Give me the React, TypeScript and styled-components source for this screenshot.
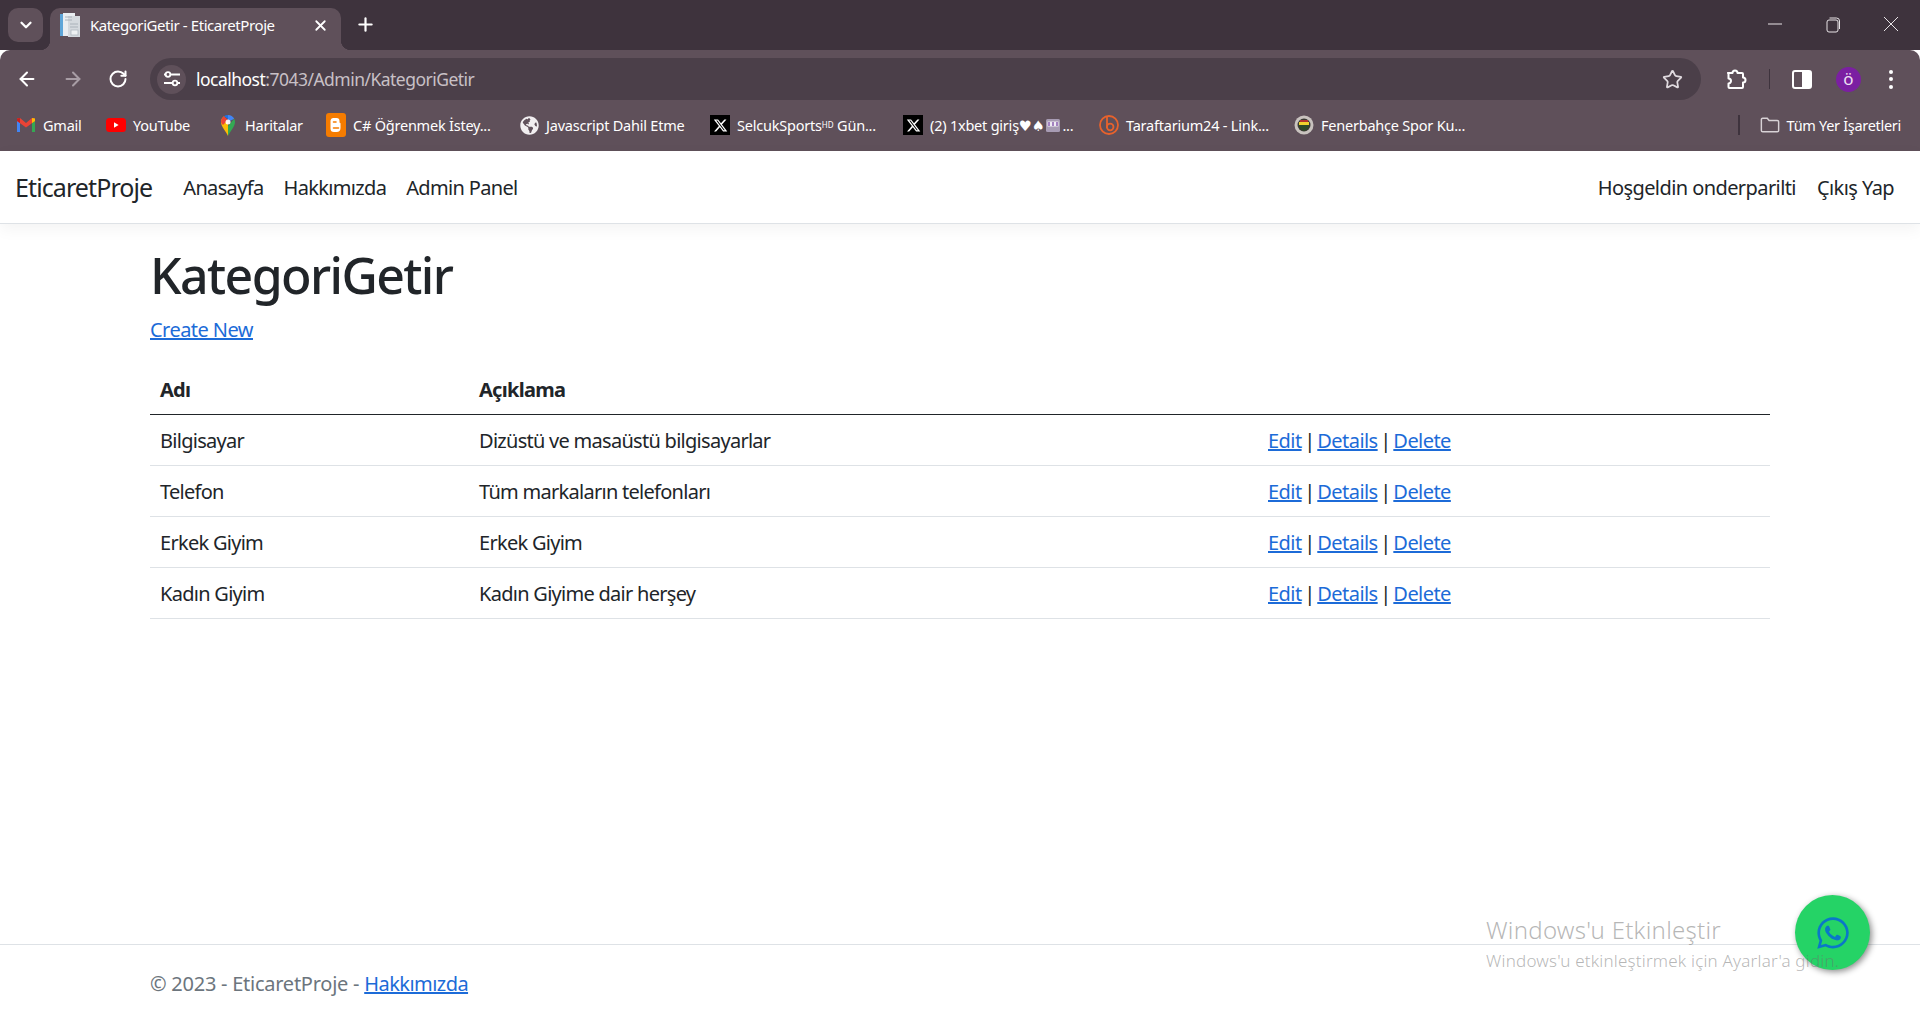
import React from "react";
import styled, { createGlobalStyle } from "styled-components";
import { ArrowLeft, ArrowRight, RotateCw, Star, X, Plus, ChevronDown } from "lucide-react";
import { FaWhatsapp, FaGlobeAmericas } from "react-icons/fa";
import { FaXTwitter } from "react-icons/fa6";

const FONT = "'Noto Sans', 'DejaVu Sans', sans-serif";

const Global = createGlobalStyle`
  html, body { margin: 0; padding: 0; background: #fff; }
  body { font-family: ${FONT}; color: #212529; }
  * { box-sizing: border-box; }
`;

const Page = styled.div`
  position: relative;
  width: 1920px;
  height: 1020px;
  overflow: hidden;
  display: flex;
  flex-direction: column;
`;

const TabStrip = styled.div`
  height: 50px;
  flex: none;
  background: #3e333d;
  display: flex;
  align-items: flex-end;
  padding-left: 8px;
  color: #fff;
`;
const TabSearch = styled.div`
  width: 35px;
  height: 34px;
  margin-bottom: 8px;
  border-radius: 10px;
  background: #5f505a;
  display: flex;
  align-items: center;
  justify-content: center;
`;
const Tab = styled.div`
  position: relative;
  width: 291px;
  height: 42px;
  margin-left: 7px;
  background: #5f505a;
  border-radius: 10px 10px 0 0;
  display: flex;
  align-items: center;
  padding: 0 12px 8px 10px;
  &::before, &::after {
    content: "";
    position: absolute;
    bottom: 0;
    width: 10px;
    height: 10px;
  }
  &::before { left: -10px; background: radial-gradient(circle at 0 0, transparent 10px, #5f505a 10.5px); }
  &::after { right: -10px; background: radial-gradient(circle at 100% 0, transparent 10px, #5f505a 10.5px); }
`;
const TabTitle = styled.span`
  margin-left: 10px;
  flex: 1;
  font-size: 15px;
  letter-spacing: -0.42px;
  white-space: nowrap;
`;
const NewTab = styled.div`
  margin: 0 0 15px 14px;
  display: flex;
`;
const WindowControls = styled.div`
  margin-left: auto;
  align-self: flex-start;
  display: flex;
  padding: 17px 22px 0 0;
  gap: 44px;
`;
const Toolbar = styled.div`
  height: 50px;
  flex: none;
  background: #5f505a;
  border-radius: 10px 10px 0 0;
  display: flex;
  align-items: flex-start;
  padding: 8px 0 0 16px;
  color: #fff;
`;
const NavIcons = styled.div`
  display: flex;
  align-items: center;
  gap: 24px;
  height: 42px;
  width: 134px;
  flex: none;
`;
const Omnibox = styled.div`
  width: 1551px;
  height: 42px;
  flex: none;
  background: #4b3f49;
  border-radius: 21px;
  display: flex;
  align-items: center;
  padding: 0 18px 0 7px;
`;
const TuneCircle = styled.div`
  width: 29px;
  height: 29px;
  border-radius: 50%;
  background: #5f505a;
  display: flex;
  align-items: center;
  justify-content: center;
  flex: none;
`;
const Url = styled.div`
  margin-left: 10px;
  flex: 1;
  font-size: 17.5px;
  letter-spacing: -0.52px;
  color: #c8c0c6;
  b { font-weight: 400; color: #fff; }
`;
const ToolIcons = styled.div`
  display: flex;
  align-items: center;
  height: 42px;
  margin-left: 24px;
`;
const ToolDivider = styled.div`
  width: 1px;
  height: 20px;
  background: #3e333d;
  margin: 0 22px 0 22px;
`;
const Avatar = styled.div`
  width: 25px;
  height: 25px;
  margin-left: 24px;
  border-radius: 50%;
  background: #7b1fa2;
  font-size: 17px;
  line-height: 1;
  padding-bottom: 2px;
  display: flex;
  align-items: center;
  justify-content: center;
  color: #ecdff2;
`;
const MenuDots = styled.div`
  display: flex;
  flex-direction: column;
  gap: 3.5px;
  margin-left: 28px;
`;
const MenuDot = styled.span`
  width: 4px;
  height: 4px;
  border-radius: 50%;
  background: #fff;
`;
const BookmarkBar = styled.div`
  height: 51px;
  flex: none;
  background: #5f505a;
  color: #fff;
  display: flex;
  align-items: flex-start;
  padding: 14px 19px 0 16px;
  font-size: 14.5px;
  letter-spacing: -0.22px;
`;
const Bookmark = styled.div<{ $w?: number }>`
  width: ${(p) => p.$w ?? 0}px;
  flex: none;
  height: 22px;
  display: flex;
  align-items: center;
  white-space: nowrap;
`;
const BmIcon = styled.span`
  width: 20px;
  height: 20px;
  margin-right: 7px;
  flex: none;
  display: flex;
  align-items: center;
  justify-content: center;
`;
const XBox = styled.span`
  width: 20px;
  height: 20px;
  background: #000;
  display: flex;
  align-items: center;
  justify-content: center;
`;
const Sup = styled.sup`
  font-size: 8px;
  letter-spacing: 0;
  line-height: 0;
  vertical-align: 4px;
`;
const BookmarkRight = styled.div`
  margin-left: auto;
  display: flex;
  align-items: center;
  height: 22px;
  letter-spacing: -0.3px;
`;
const BmDivider = styled.div`
  width: 2px;
  height: 20px;
  background: #3e333d;
  margin-right: 20px;
`;

const Navbar = styled.nav`
  height: 73px;
  flex: none;
  border-bottom: 1px solid #dee2e6;
  box-shadow: 0 5px 15px rgba(0, 0, 0, 0.05);
  display: flex;
  align-items: center;
  padding: 0 26px 0 15px;
  font-size: 20px;
  letter-spacing: -0.66px;
`;
const Brand = styled.span`
  font-size: 25px;
  letter-spacing: -0.9px;
  margin-right: 31px;
`;
const NavLink = styled.span`
  margin-right: 20px;
  color: #212529;
`;
const NavRight = styled.div`
  margin-left: auto;
  display: flex;
  gap: 21px;
  letter-spacing: -0.58px;
`;
const Container = styled.main`
  width: 1620px;
  margin: 0 150px;
  flex: 1;
`;
const Title = styled.h1`
  margin: 21px 0 0;
  font-size: 50px;
  font-weight: 500;
  line-height: 60px;
  letter-spacing: -1.6px;
`;
const CreatePara = styled.p`
  margin: 10px 0 20px;
  font-size: 20px;
  line-height: 30px;
  letter-spacing: -0.55px;
`;
const Link = styled.a`
  color: #1c6bd8;
  text-decoration: underline;
  letter-spacing: -0.55px;
`;
const Table = styled.table`
  width: 100%;
  border-collapse: collapse;
  font-size: 20px;
  letter-spacing: -0.72px;
  line-height: 30px;
`;
const Th = styled.th`
  text-align: left;
  padding: 10px 10px 9px;
  font-weight: 700;
  border-bottom: 1px solid #212529;
`;
const Td = styled.td`
  padding: 11px 10px 9px;
  border-bottom: 1px solid #dee2e6;
`;
const ActionCell = styled(Td)`
  word-spacing: -1.8px;
`;
const Footer = styled.footer`
  height: 76px;
  flex: none;
  border-top: 1px solid #dee2e6;
  padding: 24px 150px 0;
  font-size: 20px;
  line-height: 30px;
  color: #6c757d;
  letter-spacing: -0.25px;
`;
const Fab = styled.div`
  position: absolute;
  left: 1795px;
  top: 895px;
  width: 75px;
  height: 75px;
  border-radius: 50%;
  background: #25d366;
  box-shadow: 2px 2px 6px rgba(0, 0, 0, 0.45);
  display: flex;
  align-items: center;
  justify-content: center;
  color: #0a78c8;
`;
const Watermark = styled.div`
  position: absolute;
  left: 1486px;
  top: 913px;
  color: rgba(110, 110, 110, 0.5);
  font-weight: 300;
  pointer-events: none;
  white-space: nowrap;
`;
const WmTitle = styled.div`
  font-size: 24px;
  line-height: 34px;
  letter-spacing: 0.26px;
`;
const WmSub = styled.div`
  font-size: 17px;
  line-height: 24px;
  margin-top: 2px;
  letter-spacing: 0.2px;
`;

const Gmail = () => (
  <svg width="20" height="16" viewBox="0 0 20 16">
    <path d="M1 15V3l3 2v10z" fill="#4285f4" />
    <path d="M19 15V3l-3 2v10z" fill="#34a853" />
    <path d="M1 1.5 4 1l6 5 6-5 3 .5V4l-9 6.5L1 4z" fill="#ea4335" />
    <path d="M16 1l3 .5V4l-3 2z" fill="#fbbc04" />
    <path d="M1 1.5 4 1v5L1 4z" fill="#c5221f" />
  </svg>
);
const YouTube = () => (
  <svg width="20" height="14" viewBox="0 0 20 14">
    <rect width="20" height="14" rx="3.5" fill="#f00" />
    <path d="M8 4.2v5.6L12.6 7z" fill="#fff" />
  </svg>
);
const Maps = () => (
  <svg width="16" height="22" viewBox="0 0 16 22">
    <path d="M8 22C6 17 1 13 1 8a7 7 0 0 1 3-5.7L8 8z" fill="#fbbc04" />
    <path d="M8 22c2-5 7-9 7-14 0-1-.3-2.2-.8-3.2L8 12z" fill="#34a853" />
    <path d="M4 2.300A7 7 0 0 1 8 1v4z" fill="#1a73e8" />
    <path d="M8 1a7 7 0 0 1 6.200 3.800L8 8z" fill="#4285f4" />
    <path d="M1 8a7 7 0 0 1 3-5.700L8 6 3 11a7 7 0 0 1-2-3z" fill="#ea4335" />
    <circle cx="8" cy="8" r="2.500" fill="#fff" opacity=".9" />
  </svg>
);
const Blogger = () => (
  <svg width="20" height="24" viewBox="0 0 20 24">
    <rect y="0" width="20" height="24" rx="3" fill="#f57c00" />
    <path d="M7 5h3.500A3 3 0 0 1 13.500 8v1.500l1 .7V15a4 4 0 0 1-4 4H8a3.500 3.500 0 0 1-3.500-3.500v-8A3 3 0 0 1 7 5z" fill="#fff" />
    <path d="M7.500 9h2.500M7.500 15h5" stroke="#f57c00" strokeWidth="1.600" strokeLinecap="round" />
  </svg>
);
const Bitly = () => (
  <svg width="20" height="22" viewBox="0 0 20 22" fill="none" stroke="#e8622c" strokeWidth="1.800">
    <circle cx="10" cy="11" r="9" />
    <path d="M8 3v11" />
    <circle cx="11.200" cy="13" r="3.300" />
  </svg>
);
const Fener = () => (
  <svg width="20" height="22" viewBox="0 0 20 22">
    <circle cx="10" cy="11" r="9.500" fill="#c9c3bf" />
    <circle cx="10" cy="11" r="6.500" fill="#3b3a33" />
    <path d="M5 8h10v3H5z" fill="#f0d22d" />
    <path d="M5 11h10c0 3-2 5-5 6-3-1-5-3-5-6z" fill="#2f4a28" />
    <path d="M6 6h8v2H6z" fill="#b4342e" />
  </svg>
);
const Slot = () => (
  <svg width="16" height="16" viewBox="0 0 16 16" style={{ margin: "0 1px" }}>
    <rect x="1" y="2" width="14" height="13" rx="1.500" fill="#a79bb3" />
    <rect x="2.500" y="4.500" width="11" height="5" fill="#efeaf3" />
    <path d="M4 5v4M8 5v4M12 5v4" stroke="#8a5fb0" strokeWidth="1.500" />
  </svg>
);
const PageDoc = () => (
  <svg width="20" height="24" viewBox="0 0 20 24">
    <rect x="0" y="1" width="4" height="22" fill="#5ea5d8" />
    <rect x="3" y="0" width="12" height="23" fill="#e9edf1" />
    <rect x="8" y="3" width="12" height="21" fill="#d4d9de" />
    <path d="M5 4h7M5 7h7M10 11h8M10 14h8" stroke="#aab2ba" strokeWidth="1" />
    <rect x="11" y="17" width="7" height="5" fill="#eef1f3" stroke="#a9b3bb" strokeWidth=".7" />
  </svg>
);
const Tune = () => (
  <svg width="18" height="16" viewBox="0 0 18 16" fill="none" stroke="#fff" strokeWidth="1.800">
    <path d="M1 3.500h2M8 3.500h9" />
    <path d="M1 12h8M15 12h2" />
    <circle cx="5" cy="3.500" r="2.300" />
    <circle cx="12" cy="12" r="2.300" />
  </svg>
);
const Puzzle = () => (
  <svg width="22" height="22" viewBox="0 0 22 22" fill="none" stroke="#fff" strokeWidth="2" strokeLinejoin="round">
    <path d="M3 5h4.500a2.500 2.500 0 0 1 5 0H17a1 1 0 0 1 1 1v3.500a2.500 2.500 0 0 1 0 5V19a1 1 0 0 1-1 1H4.500a1 1 0 0 1-1-1v-3.500a2.500 2.500 0 0 0 0-5V6z" />
  </svg>
);
const SidePanel = () => (
  <svg width="20" height="20" viewBox="0 0 20 20">
    <rect x="1" y="2" width="18" height="17" rx="2" fill="none" stroke="#fff" strokeWidth="2" />
    <rect x="10" y="2" width="9" height="17" fill="#fff" />
  </svg>
);
const Minimize = () => (
  <svg width="14" height="14" viewBox="0 0 14 14"><path d="M0 7h14" stroke="#e8e4e7" strokeWidth="1" /></svg>
);
const Restore = () => (
  <svg width="14" height="16" viewBox="0 0 14 16" fill="none" stroke="#e8e4e7" strokeWidth="1">
    <rect x="1" y="3" width="11" height="12" rx="2" />
    <path d="M3.500 1h7a3 3 0 0 1 3 3v8" />
  </svg>
);
const CloseWin = () => (
  <svg width="14" height="14" viewBox="0 0 14 14"><path d="M0 0l14 14M14 0L0 14" stroke="#e8e4e7" strokeWidth="1" /></svg>
);
const Folder = () => (
  <svg width="22" height="18" viewBox="0 0 22 18" fill="none" stroke="#d8d2d6" strokeWidth="1.600">
    <path d="M1.500 3a1.500 1.500 0 0 1 1.500-1.500h5L10 4h9a1.500 1.500 0 0 1 1.500 1.500V15a1.500 1.500 0 0 1-1.500 1.500H3A1.500 1.500 0 0 1 1.500 15z" />
  </svg>
);

const rows = [
  ["Bilgisayar", "Dizüstü ve masaüstü bilgisayarlar"],
  ["Telefon", "Tüm markaların telefonları"],
  ["Erkek Giyim", "Erkek Giyim"],
  ["Kadın Giyim", "Kadın Giyime dair herşey"],
];

export default function App() {
  return (
    <Page>
      <Global />
      <TabStrip>
        <TabSearch>
          <ChevronDown size={18} strokeWidth={3} />
        </TabSearch>
        <Tab>
          <PageDoc />
          <TabTitle>KategoriGetir - EticaretProje</TabTitle>
          <X size={17} strokeWidth={2.5} />
        </Tab>
        <NewTab>
          <Plus size={21} strokeWidth={2.5} />
        </NewTab>
        <WindowControls>
          <Minimize />
          <Restore />
          <CloseWin />
        </WindowControls>
      </TabStrip>
      <Toolbar>
        <NavIcons>
          <ArrowLeft size={22} strokeWidth={2.2} />
          <ArrowRight size={22} strokeWidth={2.2} color="#a89da5" />
          <RotateCw size={20} strokeWidth={2.4} />
        </NavIcons>
        <Omnibox>
          <TuneCircle>
            <Tune />
          </TuneCircle>
          <Url>
            <b>localhost</b>:7043/Admin/KategoriGetir
          </Url>
          <Star size={21} strokeWidth={2} color="#e0dadf" />
        </Omnibox>
        <ToolIcons>
          <Puzzle />
          <ToolDivider />
          <SidePanel />
          <Avatar>ö</Avatar>
          <MenuDots>
            <MenuDot />
            <MenuDot />
            <MenuDot />
          </MenuDots>
        </ToolIcons>
      </Toolbar>
      <BookmarkBar>
        <Bookmark $w={90}>
          <BmIcon><Gmail /></BmIcon>Gmail
        </Bookmark>
        <Bookmark $w={112}>
          <BmIcon><YouTube /></BmIcon>YouTube
        </Bookmark>
        <Bookmark $w={108}>
          <BmIcon><Maps /></BmIcon>Haritalar
        </Bookmark>
        <Bookmark $w={193}>
          <BmIcon><Blogger /></BmIcon>C# Öğrenmek İstey...
        </Bookmark>
        <Bookmark $w={191}>
          <BmIcon><FaGlobeAmericas size={19} color="#f1eef0" /></BmIcon>Javascript Dahil Etme
        </Bookmark>
        <Bookmark $w={193}>
          <BmIcon><XBox><FaXTwitter size={15} color="#fff" /></XBox></BmIcon>SelcukSports<Sup>HD</Sup>&nbsp;Gün...
        </Bookmark>
        <Bookmark $w={196}>
          <BmIcon><XBox><FaXTwitter size={15} color="#fff" /></XBox></BmIcon>(2) 1xbet giriş♥♠<Slot /> ...
        </Bookmark>
        <Bookmark $w={195}>
          <BmIcon><Bitly /></BmIcon>Taraftarium24 - Link...
        </Bookmark>
        <Bookmark $w={170}>
          <BmIcon><Fener /></BmIcon>Fenerbahçe Spor Ku...
        </Bookmark>
        <BookmarkRight>
          <BmDivider />
          <BmIcon><Folder /></BmIcon>Tüm Yer İşaretleri
        </BookmarkRight>
      </BookmarkBar>
      <Navbar>
        <Brand>EticaretProje</Brand>
        <NavLink>Anasayfa</NavLink>
        <NavLink>Hakkımızda</NavLink>
        <NavLink>Admin Panel</NavLink>
        <NavRight>
          <span>Hoşgeldin onderparilti</span>
          <span>Çıkış Yap</span>
        </NavRight>
      </Navbar>
      <Container>
        <Title>KategoriGetir</Title>
        <CreatePara>
          <Link>Create New</Link>
        </CreatePara>
        <Table>
          <colgroup>
            <col width="319" />
            <col width="789" />
            <col />
          </colgroup>
          <thead>
            <tr>
              <Th>Adı</Th>
              <Th>Açıklama</Th>
              <Th />
            </tr>
          </thead>
          <tbody>
            {rows.map(([a, b]) => (
              <tr key={a}>
                <Td>{a}</Td>
                <Td>{b}</Td>
                <ActionCell>
                  <Link>Edit</Link> | <Link>Details</Link> | <Link>Delete</Link>
                </ActionCell>
              </tr>
            ))}
          </tbody>
        </Table>
      </Container>
      <Footer>
        © 2023 - EticaretProje - <Link>Hakkımızda</Link>
      </Footer>
      <Fab>
        <FaWhatsapp size={36} />
      </Fab>
      <Watermark>
        <WmTitle>Windows'u Etkinleştir</WmTitle>
        <WmSub>Windows'u etkinleştirmek için Ayarlar'a gidin.</WmSub>
      </Watermark>
    </Page>
  );
}
